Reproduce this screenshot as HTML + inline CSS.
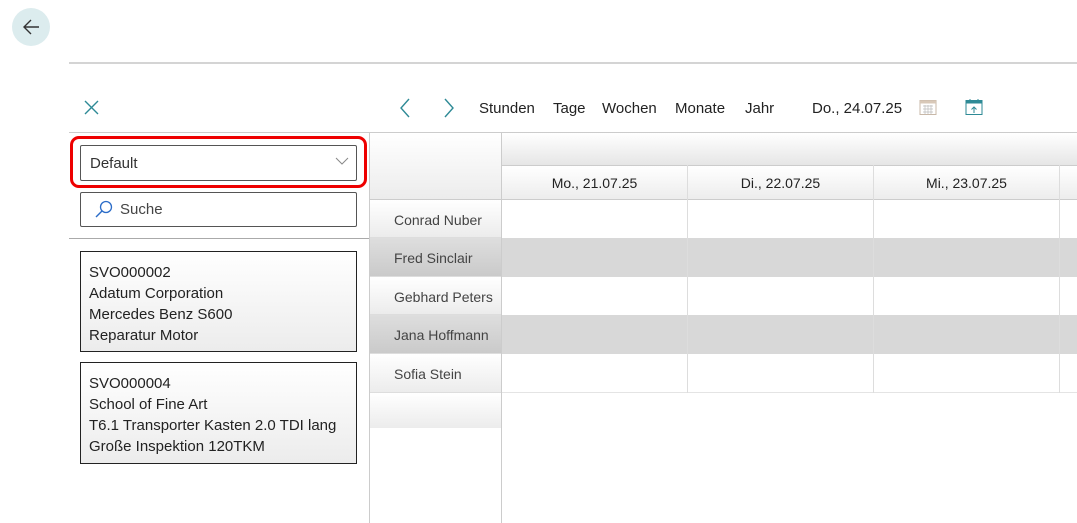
<!DOCTYPE html>
<html><head><meta charset="utf-8"><style>
*{box-sizing:border-box;margin:0;padding:0}
body{width:1077px;height:523px;position:relative;overflow:hidden;background:#fff;font-family:"Segoe UI","Liberation Sans",sans-serif;color:#222}
.a{position:absolute}
.t{font-size:15px;white-space:nowrap}
.hl{position:absolute;height:1px;background:#ccc}
.vl{position:absolute;width:1px;background:#ccc}
.res{position:absolute;left:370px;width:131px;font-size:14px;color:#444;padding-left:24px;padding-top:2px;display:flex;align-items:center;background:linear-gradient(#fff,#ececec);border-bottom:1px solid #ddd}
.res.g{background:linear-gradient(#dedede,#cacaca)}
.row{position:absolute;left:502px;right:0}
.card{position:absolute;left:80px;width:277px;border:1px solid #222;background:linear-gradient(#fff,#ececec);padding:10px 8px 9px;font-size:15px;line-height:21px;color:#222}
</style></head><body>
<div class="a" style="left:12px;top:8px;width:38px;height:38px;border-radius:50%;background:#dcecee"></div>
<svg class="a" style="left:21px;top:17px" width="20" height="20" viewBox="0 0 20 20"><path d="M18 10H3M10 3L3 10l7 7" stroke="#333" stroke-width="1.4" fill="none"/></svg>
<div class="hl" style="left:69px;right:0;top:62px;background:#d4d4d4;height:2px"></div>
<svg class="a" style="left:84px;top:100px" width="15" height="15"><path d="M1 1L14 14M14 1L1 14" stroke="#2e8a96" stroke-width="1.4"/></svg>
<svg class="a" style="left:399px;top:98px" width="12" height="20"><path d="M10 1L2 10l8 9" stroke="#2e8a96" stroke-width="1.4" fill="none"/></svg>
<svg class="a" style="left:443px;top:98px" width="12" height="20"><path d="M2 1l8 9-8 9" stroke="#2e8a96" stroke-width="1.4" fill="none"/></svg>
<div class="a t" style="left:479px;top:100px">Stunden</div>
<div class="a t" style="left:553px;top:100px">Tage</div>
<div class="a t" style="left:602px;top:100px">Wochen</div>
<div class="a t" style="left:675px;top:100px">Monate</div>
<div class="a t" style="left:745px;top:100px">Jahr</div>
<div class="a t" style="left:812px;top:100px">Do., 24.07.25</div>
<svg class="a" style="left:919px;top:98px" width="18" height="18"><rect x="1" y="2.5" width="16" height="14" fill="none" stroke="#c8b8a8"/><rect x="1" y="2.5" width="16" height="3" fill="#d8c8b8"/><path d="M4 8h10M4 11h10M4 14h10M6 7v9M9 7v9M12 7v9" stroke="#bbb" stroke-width=".7"/></svg>
<svg class="a" style="left:965px;top:98px" width="18" height="18"><rect x="1" y="2.5" width="16" height="14" fill="none" stroke="#2e8a96"/><rect x="1" y="2.5" width="16" height="3" fill="#2e8a96"/><path d="M5 1v3M13 1v3M9 15V9M6.5 11.5L9 9l2.5 2.5" stroke="#2e8a96" fill="none"/></svg>

<div class="hl" style="left:69px;right:0;top:132px"></div>
<div class="a" style="left:502px;right:0;top:133px;height:32px;background:linear-gradient(#fff,#e6e6e6)"></div>
<div class="hl" style="left:502px;right:0;top:165px"></div>
<div class="a" style="left:502px;right:0;top:166px;height:34px;background:linear-gradient(#fff,#ececec)"></div>
<div class="a t" style="left:502px;width:185px;top:175px;text-align:center;font-size:14px">Mo., 21.07.25</div>
<div class="a t" style="left:688px;width:185px;top:175px;text-align:center;font-size:14px">Di., 22.07.25</div>
<div class="a t" style="left:874px;width:185px;top:175px;text-align:center;font-size:14px">Mi., 23.07.25</div>
<div class="hl" style="left:502px;right:0;top:199px"></div>
<div class="a" style="left:370px;top:133px;width:131px;height:67px;background:linear-gradient(#fff,#ececec);border-bottom:1px solid #ccc"></div>
<div class="row" style="top:238px;height:39px;background:#d8d8d8"></div>
<div class="row" style="top:315px;height:39px;background:#d8d8d8"></div>
<div class="hl" style="left:502px;right:0;top:392px;background:#e4e4e4"></div>
<div class="vl" style="left:687px;top:165px;height:228px;background:#ddd"></div>
<div class="vl" style="left:873px;top:165px;height:228px;background:#ddd"></div>
<div class="vl" style="left:1059px;top:165px;height:228px;background:#ddd"></div>
<div class="res" style="top:200px;height:38px">Conrad Nuber</div>
<div class="res g" style="top:238px;height:39px">Fred Sinclair</div>
<div class="res" style="top:277px;height:38px">Gebhard Peters</div>
<div class="res g" style="top:315px;height:39px">Jana Hoffmann</div>
<div class="res" style="top:354px;height:39px">Sofia Stein</div>
<div class="a" style="left:370px;top:393px;width:131px;height:35px;background:linear-gradient(#fff,#ececec)"></div>
<div class="vl" style="left:369px;top:132px;height:391px"></div>
<div class="vl" style="left:501px;top:132px;height:391px"></div>

<div class="a" style="left:70px;top:136px;width:297px;height:52px;border:3px solid #e00;border-radius:9px"></div>
<div class="a" style="left:80px;top:145px;width:277px;height:36px;border:1px solid #555;border-radius:2px"></div>
<div class="a t" style="left:90px;top:155px;color:#333">Default</div>
<svg class="a" style="left:335px;top:157px" width="14" height="9"><path d="M1 1l6 6 6-6" stroke="#888" fill="none"/></svg>
<div class="a" style="left:80px;top:192px;width:277px;height:35px;border:1px solid #555;border-radius:2px"></div>
<svg class="a" style="left:94px;top:199px" width="20" height="20"><circle cx="12" cy="8" r="5.5" stroke="#2b6cc8" stroke-width="1.3" fill="none"/><path d="M8 12l-6 6" stroke="#2b6cc8" stroke-width="1.4"/></svg>
<div class="a t" style="left:120px;top:201px;color:#444">Suche</div>
<div class="hl" style="left:69px;width:300px;top:238px;background:#aaa"></div>

<div class="card" style="top:251px;height:101px">SVO000002<br>Adatum Corporation<br>Mercedes Benz S600<br>Reparatur Motor</div>
<div class="card" style="top:362px;height:102px">SVO000004<br>School of Fine Art<br>T6.1 Transporter Kasten 2.0 TDI lang<br>Große Inspektion 120TKM</div>
</body></html>
